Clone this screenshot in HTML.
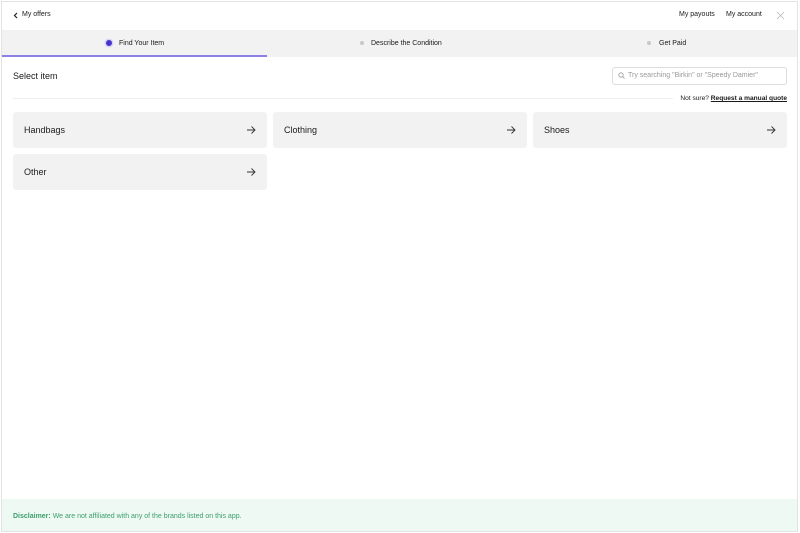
<!DOCTYPE html>
<html><head><style>
*{box-sizing:border-box;margin:0;padding:0}
body{width:800px;height:533px;background:#fff;font-family:"Liberation Sans",Arial,sans-serif;color:#1a1a1a;position:relative;overflow:hidden}
.frame{position:absolute;left:1px;top:1px;width:797px;height:531px;border:1px solid #e3e3e3}
.abs{position:absolute;white-space:nowrap}
.steps{position:absolute;left:2px;top:30px;width:795px;height:27px;background:#f2f2f2}
.ul{position:absolute;left:2px;top:55px;width:265px;height:2px;background:#8b80e6}
.card{position:absolute;height:36px;background:#f2f2f2;border-radius:3px;font-size:9px;padding-left:11px;line-height:37px}
.card svg{position:absolute;right:11px;top:13px}
.foot{position:absolute;left:2px;top:499px;width:795px;height:32px;background:#eef9f3;font-size:7px;color:#3d9e6c;padding:13px 0 0 11px}
</style></head><body>
<div class="frame"></div>
<svg class="abs" style="left:13px;top:12px" width="6" height="7" viewBox="0 0 6 7"><path d="M4 1L1.5 3.5L4 6" fill="none" stroke="#222" stroke-width="1.2"/></svg>
<div class="abs" style="left:22px;top:11px;font-size:7px">My offers</div>
<div class="abs" style="left:679px;top:11px;font-size:7px">My payouts</div>
<div class="abs" style="left:726px;top:11px;font-size:7px">My account</div>
<svg class="abs" style="left:776px;top:11px" width="9" height="9" viewBox="0 0 9 9"><path d="M1 1L8 8M8 1L1 8" stroke="#bbb" stroke-width="0.8"/></svg>
<div class="steps"></div>
<div class="ul"></div>
<div class="abs" style="left:106px;top:40px;width:6px;height:6px;border-radius:50%;background:#4433cc;box-shadow:0 0 0 1.5px #d8d4f5"></div>
<div class="abs" style="left:119px;top:40px;font-size:7px">Find Your Item</div>
<div class="abs" style="left:360px;top:41px;width:4px;height:4px;border-radius:50%;background:#c8c8c8"></div>
<div class="abs" style="left:371px;top:40px;font-size:7px">Describe the Condition</div>
<div class="abs" style="left:647px;top:41px;width:4px;height:4px;border-radius:50%;background:#c8c8c8"></div>
<div class="abs" style="left:659px;top:40px;font-size:7px">Get Paid</div>
<div class="abs" style="left:13px;top:71px;font-size:9px">Select item</div>
<div class="abs" style="left:13px;top:98px;width:660px;height:1px;background:#eee"></div>
<div class="abs" style="left:612px;top:67px;width:175px;height:18px;border:1px solid #ddd;border-radius:3px"></div>
<svg class="abs" style="left:618px;top:72px" width="7" height="7" viewBox="0 0 7 7"><circle cx="3" cy="3" r="2.2" fill="none" stroke="#999" stroke-width="0.8"/><path d="M4.6 4.6L6.5 6.5" stroke="#999" stroke-width="0.8"/></svg>
<div class="abs" style="left:628px;top:72px;font-size:7px;color:#999">Try searching "Birkin" or "Speedy Damier"</div>
<div class="abs" style="right:13px;top:95px;font-size:6.6px">Not sure? <u style="font-weight:bold">Request a manual quote</u></div>
<div class="card" style="left:13px;top:112px;width:254px">Handbags<svg width="10" height="10" viewBox="0 0 10 10"><path d="M1 5H9M5.5 1.5L9 5L5.5 8.5" fill="none" stroke="#333" stroke-width="0.9"/></svg></div>
<div class="card" style="left:273px;top:112px;width:254px">Clothing<svg width="10" height="10" viewBox="0 0 10 10"><path d="M1 5H9M5.5 1.5L9 5L5.5 8.5" fill="none" stroke="#333" stroke-width="0.9"/></svg></div>
<div class="card" style="left:533px;top:112px;width:254px">Shoes<svg width="10" height="10" viewBox="0 0 10 10"><path d="M1 5H9M5.5 1.5L9 5L5.5 8.5" fill="none" stroke="#333" stroke-width="0.9"/></svg></div>
<div class="card" style="left:13px;top:154px;width:254px">Other<svg width="10" height="10" viewBox="0 0 10 10"><path d="M1 5H9M5.5 1.5L9 5L5.5 8.5" fill="none" stroke="#333" stroke-width="0.9"/></svg></div>
<div class="foot" style="padding-top:14px"><b>Disclaimer:</b> We are not affiliated with any of the brands listed on this app.</div>
</body></html>
